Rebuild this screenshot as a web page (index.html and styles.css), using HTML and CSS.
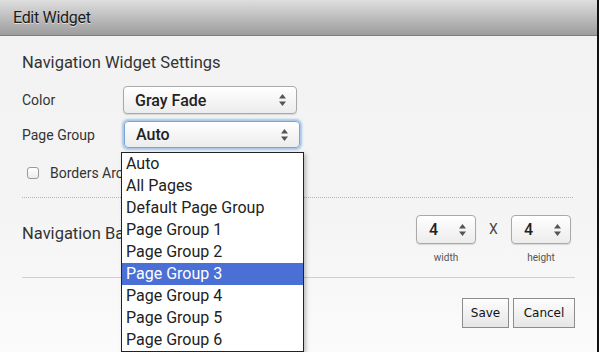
FILE: index.html
```html
<!DOCTYPE html>
<html lang="en">

<head>
  <meta charset="UTF-8">
  <title>Edit Widget</title>
  <link rel="stylesheet" href="styles.css">
</head>

<body>
  <div class="dialog">
    <div class="header">Edit Widget</div>

    <div class="content">
      <h2 class="section">Navigation Widget Settings</h2>

      <div class="row">
        <span class="label">Color</span>
        <div class="select">
          <span>Gray Fade</span>
          <svg class="arrows" width="7" height="12" viewBox="0 0 7 12"><path d="M3.5 0 L7 4.5 H0 Z M3.5 12 L7 7.5 H0 Z" fill="#555"/></svg>
        </div>
      </div>

      <div class="row row-focus">
        <span class="label">Page Group</span>
        <div class="select focus">
          <span>Auto</span>
          <svg class="arrows" width="7" height="12" viewBox="0 0 7 12"><path d="M3.5 0 L7 4.5 H0 Z M3.5 12 L7 7.5 H0 Z" fill="#555"/></svg>
        </div>

        <ul class="dropdown">
          <li>Auto</li>
          <li>All Pages</li>
          <li>Default Page Group</li>
          <li>Page Group 1</li>
          <li>Page Group 2</li>
          <li class="active">Page Group 3</li>
          <li>Page Group 4</li>
          <li>Page Group 5</li>
          <li>Page Group 6</li>
        </ul>
      </div>

      <label class="check">
        <span class="box"></span>
        Borders Around Widget
      </label>

      <div class="dotted"></div>

      <div class="navsize">
        <h2 class="section">Navigation Bar Size</h2>
        <div class="sizes">
          <div class="spin-group">
            <div class="spin">
              <span>4</span>
              <svg class="arrows" width="7" height="12" viewBox="0 0 7 12"><path d="M3.5 0 L7 4.5 H0 Z M3.5 12 L7 7.5 H0 Z" fill="#555"/></svg>
            </div>
            <span class="hint">width</span>
          </div>
          <span class="times">X</span>
          <div class="spin-group">
            <div class="spin">
              <span>4</span>
              <svg class="arrows" width="7" height="12" viewBox="0 0 7 12"><path d="M3.5 0 L7 4.5 H0 Z M3.5 12 L7 7.5 H0 Z" fill="#555"/></svg>
            </div>
            <span class="hint">height</span>
          </div>
        </div>
      </div>

      <div class="line"></div>

      <div class="buttons">
        <button class="btn save">Save</button>
        <button class="btn cancel">Cancel</button>
      </div>
    </div>
  </div>
</body>

</html>
```

FILE: styles.css
```css
body {
  margin: 0;
  font-family: Roboto, "Noto Sans", sans-serif;
  background: #fff;
}

.dialog {
  width: 597px;
  height: 352px;
  border-right: 2px solid #111;
  overflow: hidden;
  background: linear-gradient(#f2f2f2, #f4f4f4 60%, #fbfbfb);
}

.header {
  height: 35px;
  line-height: 36px;
  padding-left: 13px;
  font-size: 16px;
  letter-spacing: -0.3px;
  color: #1a1a1a;
  text-shadow: 0 1px 0 rgba(255, 255, 255, .6);
  background: linear-gradient(#dedede, #c4c4c4 40%, #9c9c9c);
  border-bottom: 1px solid #7d7d7d;
}

.content {
  position: relative;
  padding: 18px 22px 0 22px;
}

.section {
  margin: 0;
  font-size: 16.5px;
  font-weight: 400;
  line-height: 18px;
  color: #333;
}

.row {
  display: flex;
  align-items: center;
  height: 28px;
  margin-top: 14px;
}

.row-focus {
  position: relative;
  height: 29px;
  margin-top: 6px;
}

.label {
  width: 101px;
  font-size: 14px;
  color: #333;
}

.select {
  display: flex;
  align-items: center;
  justify-content: space-between;
  box-sizing: border-box;
  width: 174px;
  height: 28px;
  padding: 0 10px 0 11px;
  border: 1px solid #a9a9a9;
  border-radius: 4px;
  background: linear-gradient(#fff, #ececec);
  box-shadow: 0 1px 1px rgba(0, 0, 0, .12);
  font-size: 16px;
  font-weight: 500;
  color: #222;
}

.select.focus {
  width: 176px;
  height: 27px;
  margin-left: 1px;
  border-color: #7aa4d6;
  box-shadow: 0 0 2px 2px rgba(110, 160, 220, .55);
  padding-right: 11px;
}

.dropdown {
  position: absolute;
  left: 99px;
  top: 32px;
  z-index: 2;
  width: 181px;
  margin: 0;
  padding: 0;
  list-style: none;
  background: #fff;
  border: 1px solid #222;
  box-shadow: 2px 2px 4px rgba(0, 0, 0, .25);
}

.dropdown li {
  height: 22px;
  line-height: 22px;
  padding-left: 4px;
  font-size: 16px;
  font-weight: 400;
  color: #222;
}

.dropdown .active {
  background: #4a6fd5;
  color: #fff;
}

.check {
  display: flex;
  align-items: center;
  height: 16px;
  margin-top: 16px;
  padding-left: 5px;
  font-size: 14px;
  color: #333;
}

.box {
  width: 10px;
  height: 10px;
  margin-right: 11px;
  border: 1px solid #9a9a9a;
  border-radius: 3px;
  background: linear-gradient(#fff, #ececec);
}

.dotted {
  margin-top: 16px;
  margin-right: 2px;
  border-top: 1px dotted #b5b5b5;
}

.navsize {
  display: flex;
  justify-content: space-between;
  align-items: flex-start;
  height: 62px;
  padding-top: 17px;
}

.navsize .section {
  margin-top: 10px;
}

.sizes {
  display: flex;
  align-items: flex-start;
  margin-right: 4px;
}

.spin-group {
  display: flex;
  flex-direction: column;
  align-items: center;
}

.spin {
  display: flex;
  align-items: center;
  justify-content: space-between;
  box-sizing: border-box;
  width: 60px;
  height: 29px;
  padding: 0 9px 0 12px;
  border: 1px solid #a9a9a9;
  border-radius: 4px;
  background: linear-gradient(#fff, #ececec);
  box-shadow: 0 1px 1px rgba(0, 0, 0, .12);
  font-size: 16px;
  font-weight: 500;
  color: #222;
}

.hint {
  margin-top: 8px;
  font-size: 10px;
  color: #555;
}

.times {
  width: 35px;
  line-height: 29px;
  text-align: center;
  font-size: 14px;
  color: #444;
}

.line {
  border-top: 1px solid #cfcfcf;
}

.buttons {
  display: flex;
  justify-content: flex-end;
  gap: 4px;
  margin-top: 20px;
}

.btn {
  height: 30px;
  padding: 0;
  border: 1px solid #8c8c8c;
  background: linear-gradient(#fdfdfd, #e6e6e6);
  font-family: "DejaVu Sans", sans-serif;
  font-size: 12px;
  color: #111;
}

.save {
  width: 47px;
}

.cancel {
  width: 62px;
}
```
